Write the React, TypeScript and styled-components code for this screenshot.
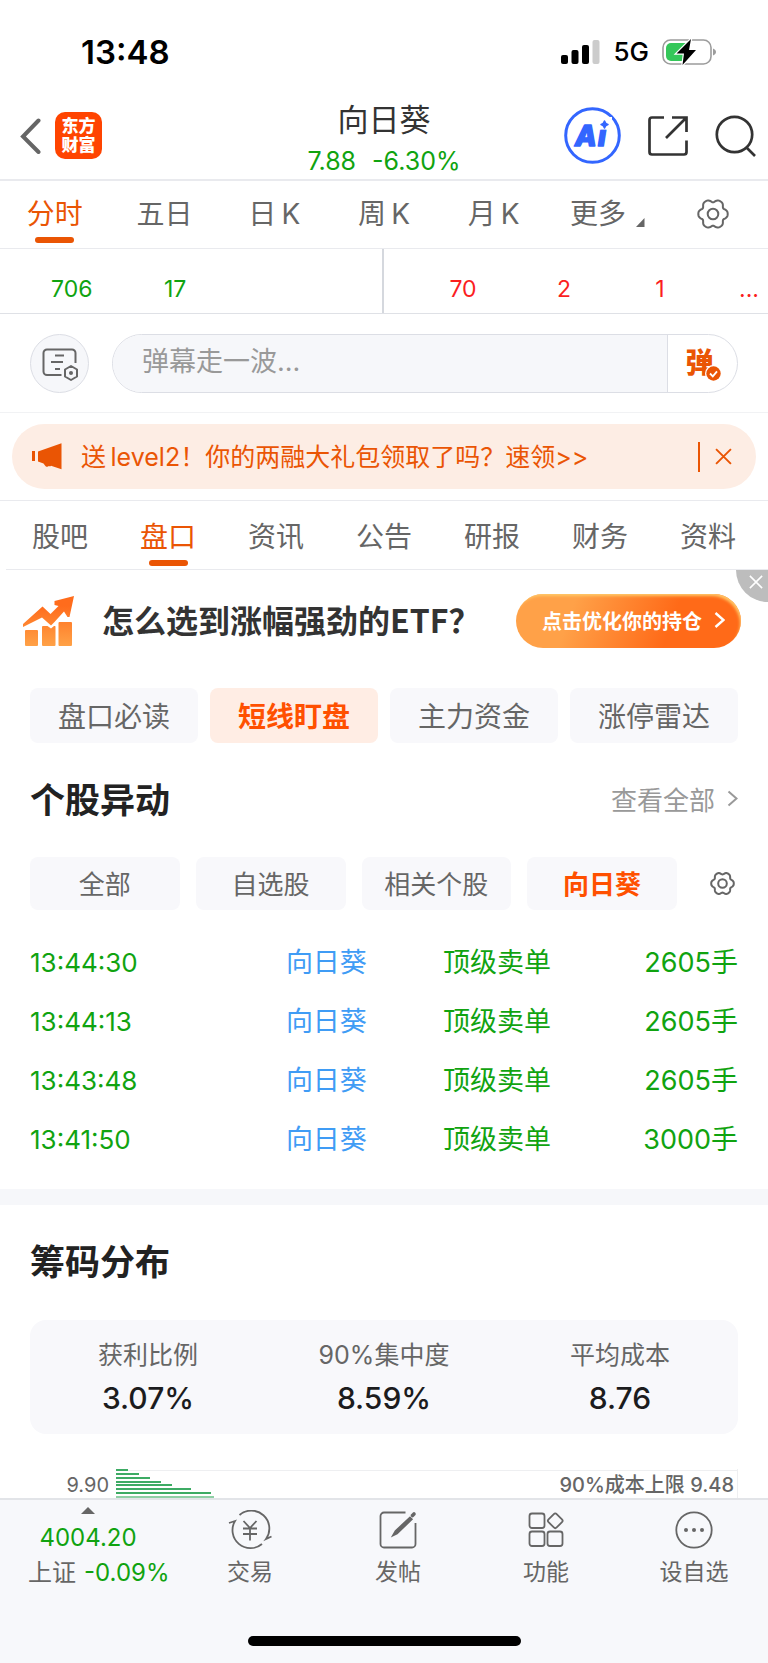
import React from "react";
import styled, { createGlobalStyle } from "styled-components";

const sans = `Inter, "Noto Sans CJK SC", sans-serif`;
const c = {
  orange: "#ea5504",
  vivid: "#ff5000",
  green: "#10a310",
  red: "#fb1f1f",
  blue: "#3f9cf5",
  ink: "#222",
  text: "#666",
  muted: "#999",
  line: "#e9eaee",
  soft: "#f8f8fb",
};

const Global = createGlobalStyle`
  *, *::before, *::after { box-sizing: border-box; }
  body { margin: 0; background: #fff; color: ${c.text}; font-family: ${sans}; }
  button, input { font: inherit; color: inherit; }
  button { border: 0; padding: 0; margin: 0; background: none; cursor: pointer; }
  svg { display: block; flex: none; }
`;

const Page = styled.div`
  min-height: 100vh;
  display: flex;
  flex-direction: column;
`;

/* status bar */
const StatusBar = styled.div`
  height: 95px;
  padding: 8px 51px 0 81px;
  display: flex;
  align-items: center;
  justify-content: space-between;
  color: #000;
`;
const Clock = styled.time`
  font-size: 33px;
  font-weight: 600;
`;
const StatusIcons = styled.div`
  display: flex;
  align-items: center;
  gap: 13px;
  font-size: 26px;
  font-weight: 500;
`;

/* header */
const Header = styled.header`
  height: 86px;
  padding: 0 11px;
  display: grid;
  grid-template-columns: 1fr auto 1fr;
  align-items: center;
  border-bottom: 2px solid ${c.line};
`;
const HeaderSide = styled.div<{ $end?: boolean }>`
  display: flex;
  align-items: center;
  gap: ${(p) => (p.$end ? 27 : 14)}px;
  padding: 0 0 3px ${(p) => (p.$end ? 0 : 9)}px;
  justify-content: ${(p) => (p.$end ? "flex-end" : "flex-start")};
`;
const Logo = styled.a`
  width: 47px;
  height: 47px;
  border-radius: 10px;
  background: #ff4400;
  color: #fff;
  display: flex;
  align-items: center;
  justify-content: center;
  text-align: center;
  text-decoration: none;
  font-size: 17px;
  line-height: 19px;
  font-weight: 900;
`;
const StockTitle = styled.div`
  padding-top: 2px;
  text-align: center;
`;
const StockName = styled.h1`
  margin: 0;
  font-size: 31px;
  line-height: 46px;
  font-weight: 400;
  color: #333;
`;
const StockQuote = styled.div`
  display: flex;
  justify-content: center;
  gap: 16px;
  font-size: 25px;
  line-height: 36px;
  color: ${c.green};
`;

/* tab strips */
const Tabs = styled.nav<{ $inset?: boolean }>`
  height: ${(p) => (p.$inset ? 69 : 68)}px;
  margin-left: ${(p) => (p.$inset ? 6 : 0)}px;
  padding: 0 ${(p) => (p.$inset ? 6 : 0)}px ${(p) => (p.$inset ? 3 : 5)}px 0;
  display: flex;
  align-items: flex-end;
  border-bottom: 1px solid ${c.line};
`;
const Tab = styled.button<{ $active?: boolean }>`
  flex: 1;
  display: flex;
  flex-direction: column;
  align-items: center;
  gap: 3px;
  font-size: 28px;
  line-height: 40px;
  color: ${(p) => (p.$active ? c.orange : c.text)};
  &::after {
    content: "";
    width: 39px;
    height: 6px;
    border-radius: 3px;
    background: ${(p) => (p.$active ? c.orange : "transparent")};
  }
`;
const TabLabel = styled.span<{ $menu?: boolean }>`
  height: 40px;
  display: flex;
  align-items: center;
  gap: 10px;
  padding-left: ${(p) => (p.$menu ? 8 : 0)}px;
`;

/* order volumes */
const Volumes = styled.div`
  height: 65px;
  display: grid;
  grid-template-columns: 1fr 1fr;
  font-size: 23px;
  border-bottom: 1px solid #dfe1e6;
`;
const VolumeSide = styled.div<{ $sell?: boolean }>`
  display: grid;
  grid-template-columns: ${(p) => (p.$sell ? "98fr 104fr 88fr 64fr" : "104fr 104fr 156fr")};
  padding: ${(p) => (p.$sell ? "16px 0 0 30px" : "16px 0 0 20px")};
  align-items: center;
  text-align: center;
  color: ${(p) => (p.$sell ? c.red : c.green)};
  border-right: ${(p) => (p.$sell ? "0" : "2px solid #d5d8de")};
`;
const More = styled.span`
  padding-left: 26px;
`;

/* bullet comment bar */
const CommentBar = styled.form`
  height: 99px;
  margin: 0;
  padding: 0 30px;
  display: flex;
  align-items: center;
  gap: 23px;
  border-bottom: 1px solid #f1f2f4;
`;
const RoundButton = styled.button`
  width: 59px;
  height: 59px;
  flex: none;
  border: 1px solid #dcdee5;
  border-radius: 50%;
  background: #f6f7fa;
  display: flex;
  align-items: center;
  justify-content: center;
  padding: 3px 0 0 2px;
`;
const CommentBox = styled.div`
  flex: 1;
  height: 59px;
  display: flex;
  border: 1px solid #dcdee5;
  border-radius: 30px;
  overflow: hidden;
`;
const CommentInput = styled.input`
  flex: 1;
  min-width: 0;
  border: 0;
  outline: 0;
  padding: 0 29px 4px;
  background: #f6f7fa;
  font-size: 27px;
  &::placeholder { color: #999; opacity: 1; }
`;
const CommentToggle = styled.button`
  width: 70px;
  border-left: 1px solid #dcdee5;
  display: flex;
  align-items: center;
  justify-content: center;
  color: ${c.orange};
  font-size: 28px;
  line-height: 40px;
  font-weight: 900;
  position: relative;
  padding-right: 6px;
  svg { position: absolute; right: 15px; bottom: 10px; }
`;

/* promo notice */
const NoticeWrap = styled.div`
  padding: 11px 12px;
  border-bottom: 1px solid ${c.line};
`;
const Notice = styled.div`
  height: 65px;
  padding: 0 24px 0 20px;
  display: flex;
  align-items: center;
  border-radius: 33px;
  background: #fdede4;
  color: ${c.orange};
`;
const NoticeLink = styled.a`
  flex: 1;
  margin-left: 19px;
  padding-bottom: 3px;
  color: inherit;
  text-decoration: none;
  font-size: 25px;
  white-space: nowrap;
`;
const NoticeClose = styled.button`
  height: 30px;
  padding-left: 15px;
  border-left: 2px solid ${c.orange};
`;

/* ETF ad */
const Ad = styled.section`
  position: relative;
  height: 102px;
  padding: 0 27px 0 23px;
  display: flex;
  align-items: center;
`;
const AdText = styled.strong`
  flex: 1;
  margin-left: 27px;
  padding-bottom: 4px;
  font-size: 32px;
  font-weight: 600;
  color: #333;
  white-space: nowrap;
  font-family: "Noto Sans CJK SC", sans-serif;
`;
const AdButton = styled.button`
  width: 225px;
  height: 54px;
  padding: 0 0 2px 10px;
  border-radius: 27px;
  display: flex;
  align-items: center;
  justify-content: center;
  gap: 12px;
  background: linear-gradient(110deg, #ffa148 25%, #ff6a18 68%);
  box-shadow: inset -2px 3px 3px -1px #ffc868;
  color: #fff;
  font-size: 20px;
  font-weight: 700;
`;
const AdClose = styled.button`
  position: absolute;
  top: 0;
  right: 0;
  width: 32px;
  height: 32px;
  border-bottom-left-radius: 32px;
  background: #bdbdbd;
  display: flex;
  justify-content: flex-end;
  padding: 0 5px 8px 0;
  align-items: center;
`;

/* chips and sections */
const Section = styled.section`
  padding: 0 30px;
`;
const ChipRow = styled.div`
  margin-top: 16px;
  display: grid;
  grid-template-columns: repeat(4, 1fr);
  gap: 12px;
`;
const FilterRow = styled.div`
  margin-top: 29px;
  display: grid;
  grid-template-columns: repeat(4, 1fr) 45px;
  gap: 16px;
  align-items: center;
`;
const Chip = styled.button<{ $active?: boolean; $tinted?: boolean; $small?: boolean }>`
  height: ${(p) => (p.$small ? 53 : 55)}px;
  padding-bottom: ${(p) => (p.$small ? 3 : 1)}px;
  border-radius: 8px;
  font-size: ${(p) => (p.$small ? 26 : 28)}px;
  font-weight: ${(p) => (p.$active ? 700 : 400)};
  color: ${(p) => (p.$active ? c.vivid : c.text)};
  background: ${(p) => (p.$tinted ? "#ffede4" : c.soft)};
`;
const FilterSettings = styled.button`
  display: flex;
  justify-content: flex-end;
  padding-right: 3px;
`;
const SectionHead = styled.div`
  margin-top: 29px;
  display: flex;
  align-items: center;
  justify-content: space-between;
`;
const Heading = styled.h2`
  margin: 0;
  font-size: 35px;
  line-height: 56px;
  font-weight: 600;
  color: ${c.ink};
`;
const SeeAll = styled.a`
  display: flex;
  align-items: center;
  gap: 12px;
  padding-bottom: 3px;
  font-size: 26px;
  color: ${c.muted};
  text-decoration: none;
`;

const MoveTable = styled.table`
  width: 100%;
  margin: 23px 0 20px;
  border-collapse: collapse;
  table-layout: fixed;
  font-size: 27px;
  color: ${c.green};
`;
const MoveTime = styled.td`
  width: 36%;
  height: 59px;
  padding: 0;
  font-size: 26px;
`;
const MoveName = styled.td`
  padding: 0 0 4px 1px;
  color: ${c.blue};
`;
const MoveKind = styled.td`
  width: 150px;
  padding: 0 0 4px;
  white-space: nowrap;
`;
const MoveSize = styled.td`
  width: 145px;
  padding: 0 0 4px;
  text-align: right;
  white-space: nowrap;
`;
const Divider = styled.hr`
  width: 100%;
  height: 16px;
  margin: 0;
  border: 0;
  background: #f6f7fa;
`;
const StatCard = styled.dl`
  margin: 30px 0 0;
  height: 114px;
  padding-bottom: 2px;
  border-radius: 16px;
  background: ${c.soft};
  display: grid;
  grid-template-columns: repeat(3, 1fr);
  align-items: center;
  text-align: center;
`;
const StatLabel = styled.dt`
  font-size: 25px;
  line-height: 44px;
`;
const StatValue = styled.dd`
  margin: 0;
  font-size: 30px;
  line-height: 42px;
  font-weight: 500;
  color: #1c1c1e;
`;

/* chip distribution chart */
const Chart = styled.div`
  height: 29px;
  margin-top: 35px;
  overflow: hidden;
  display: flex;
  font-size: 20px;
  line-height: 32px;
`;
const AxisLabel = styled.span`
  width: 86px;
  padding-right: 7px;
  text-align: right;
`;
const Plot = styled.div`
  flex: 1;
  display: flex;
  justify-content: space-between;
  border-right: 1px solid #eeeff1;
  background: linear-gradient(#eeeff1, #eeeff1) 0 1px / 100% 1px no-repeat;
`;
const UpperCost = styled.span`
  padding-right: 3px;
  font-weight: 500;
`;

/* bottom bar */
const BottomBar = styled.footer`
  flex: 1;
  border-top: 2px solid #e2e4e8;
  background: #f7f8fb;
  display: flex;
  flex-direction: column;
  justify-content: space-between;
  align-items: center;
  padding-bottom: 17px;
`;
const BottomNav = styled.nav`
  width: 100%;
  display: grid;
  grid-template-columns: 176fr 148fr 148fr 148fr 148fr;
`;
const IndexButton = styled.button`
  padding-top: 7px;
  display: flex;
  flex-direction: column;
  align-items: center;
  font-size: 24px;
  line-height: 35px;
  white-space: nowrap;
`;
const IndexValue = styled.span`
  margin-top: 6px;
  color: ${c.green};
`;
const IndexChange = styled.span`
  display: flex;
  gap: 8px;
  align-self: flex-start;
  margin-left: 28px;
  em { font-style: normal; color: ${c.green}; }
`;
const NavButton = styled.button`
  padding-top: 10px;
  display: flex;
  flex-direction: column;
  align-items: center;
  gap: 4px;
  font-size: 23px;
  line-height: 36px;
`;
const HomeIndicator = styled.div`
  width: 273px;
  height: 10px;
  border-radius: 5px;
  background: #000;
`;

/* icons */
function gearPath(radius: number, wave: number, center: number) {
  const pts: string[] = [];
  for (let i = 0; i < 120; i++) {
    const a = (i / 120) * Math.PI * 2;
    const r = radius + wave * (Math.cos(6 * a) - 0.2 * Math.cos(12 * a));
    pts.push(`${(center + r * Math.cos(a)).toFixed(2)} ${(center + r * Math.sin(a)).toFixed(2)}`);
  }
  return `M${pts.join("L")}Z`;
}
const Gear = ({ size, hole, wave }: { size: number; hole: number; wave: number }) => (
  <svg width={size} height={size} fill="none" stroke={c.text} strokeWidth="2">
    <path d={gearPath(size / 2 - 1 - wave, wave, size / 2)} />
    <circle cx={size / 2} cy={size / 2} r={hole} />
  </svg>
);
const Signal = () => (
  <svg width="39" height="25">
    <rect x="0" y="16" width="7" height="9" rx="2" />
    <rect x="10.5" y="11" width="7" height="14" rx="2" />
    <rect x="21" y="6" width="7" height="19" rx="2" />
    <rect x="31.5" y="1" width="7" height="24" rx="2" fill="#ccc" />
  </svg>
);
const Battery = () => (
  <svg width="55" height="28" viewBox="0 0 55 28">
    <rect x="1" y="2" width="48" height="24" rx="7.5" fill="#fff" stroke="#9c9c9c" strokeWidth="1.6" />
    <path d="M9 5H24V23H9a5 5 0 0 1-5-5v-8a5 5 0 0 1 5-5z" fill="#34c759" />
    <path d="M51 10.5c4 1.500 4 5.500 0 7z" fill="#9c9c9c" />
    <path d="M29 1 14.500 15.500h7.500L20.500 27 34 12h-7z" fill="#000" stroke="#fff" strokeWidth="2.400" paintOrder="stroke" />
  </svg>
);
const Back = () => (
  <svg width="21" height="36" fill="none" stroke={c.text} strokeWidth="4" strokeLinecap="round">
    <path d="M18.500 2.500 3 18.500l15.500 15.500" />
  </svg>
);
const AiMark = () => (
  <svg width="57" height="57">
    <circle cx="28.500" cy="28.500" r="26.800" fill="none" stroke="#3366ff" strokeWidth="3" />
    <g fill="#3366ff" stroke="#3366ff" strokeWidth="1.600" strokeLinejoin="round" fontFamily="Inter, sans-serif" fontSize="28" fontWeight="800" fontStyle="italic">
      <text y="38.500"><tspan x="11">A</tspan><tspan x="34">i</tspan></text>
    </g>
    <path d="M35 10h13v12.500H34z" fill="#fff" />
    <path d="M40.500 14q.8 3 3.500 3.500-2.700.8-3.500 3.500-.8-2.700-3.500-3.500 2.700-.5 3.500-3.500z" fill="#3366ff" stroke="#3366ff" strokeWidth="1.500" strokeLinejoin="round" />
  </svg>
);
const Share = () => (
  <svg width="40" height="40" fill="none" stroke="#333" strokeWidth="2.700">
    <path d="M16 1.500H4A2.500 2.500 0 0 0 1.500 4v32A2.500 2.500 0 0 0 4 38.500h32a2.500 2.500 0 0 0 2.500-2.500V24.500M24 1.500h14.500V16M38 2 18 22" />
  </svg>
);
const Search = () => (
  <svg width="42" height="42" fill="none" stroke="#333" strokeWidth="2.700">
    <circle cx="19.500" cy="19.500" r="17.700" />
    <path d="m31.500 32.500 8.500 8.500" />
  </svg>
);
const CommentSettings = () => (
  <svg width="38" height="34" fill="none" stroke={c.text} strokeWidth="2">
    <path d="M33.500 15V5A3.500 3.500 0 0 0 30 1.500H5A3.500 3.500 0 0 0 1.500 5v18.500A3.500 3.500 0 0 0 5 27h14.500" />
    <path d="M13 7.500h9M9 14h12M13 21h5" />
    <path d="m29 18 6 3.500v7L29 32l-6-3.500v-7z" strokeLinejoin="round" />
    <circle cx="29" cy="25" r="2" fill={c.text} stroke="none" />
  </svg>
);
const CheckBadge = () => (
  <svg width="17" height="17">
    <circle cx="8.500" cy="8.500" r="8.500" fill="#fff" />
    <circle cx="8.500" cy="8.500" r="7.200" fill={c.orange} />
    <path d="m5 8.500 2.800 2.800L12 6.300" fill="none" stroke="#fff" strokeWidth="1.800" />
  </svg>
);
const Megaphone = () => (
  <svg width="30" height="27" fill={c.orange}>
    <path d="M0 8h3v10H0zM6 8.500 29.500.3V26.300L19 22.800c-.8 1-1.600.2-2.200.2-.8 1-3 1-3.800-.6l-1.500-2L6 18.500z" />
  </svg>
);
const Cross = ({ size, color, width }: { size: number; color: string; width: number }) => (
  <svg width={size} height={size} viewBox="0 0 16 16" fill="none" stroke={color} strokeWidth={width}>
    <path d="m1 1 14 14M15 1 1 15" />
  </svg>
);
const Growth = () => (
  <svg width="52" height="51">
    <defs>
      <linearGradient id="growth" x1="0" y1="0" x2="0" y2="51" gradientUnits="userSpaceOnUse">
        <stop offset=".2" stopColor="#ff6c1c" />
        <stop offset="1" stopColor="#ffa348" />
      </linearGradient>
    </defs>
    <path
      fill="url(#growth)"
      d="M0 28 19.500 10.500l8 7.500 8-8-4-1V5L51 0 46.500 21h-2L41 15.500 31.500 26 28 29.500 19 21.500 0 31zM2 35q0-1 1-1h11q1 0 1 1v14q0 1-1 1H3q-1 0-1-1zM19 31q0-1 1-1h4.500l3.500 2.500 3-2.500h1q.500 0 .5 1v18q0 1-1 1H20q-1 0-1-1zM35.500 27q0-1 1-1h11.500q1 0 1 1v22q0 1-1 1H36.500q-1 0-1-1z"
    />
  </svg>
);
const Chevron = ({ height, width = 2 }: { height: number; width?: number }) => (
  <svg width="11" height={height} viewBox="0 0 11 16" fill="none" stroke="currentColor" strokeWidth={width}>
    <path d="m1.500 1 8 7-8 7" />
  </svg>
);
const bars = [12, 23, 34, 45, 56, 75, 95, 98];
const Bars = () => (
  <svg width="98" height="29">
    {bars.map((w, i) => (
      <rect key={w} x="0" y={i * 4 - (i > 3 ? 1 : 0)} width={w} height="2" fill={i === 7 ? "#8fcfa5" : "#3dab64"} />
    ))}
  </svg>
);
const Trade = () => (
  <svg width="44" height="40" fill="none" stroke={c.text} strokeWidth="1.800">
    <path d="M11.500 5A18 18 0 0 1 38 29l5.500-2.500M34 34A18 18 0 0 1 7 11L1 13" />
    <path d="m15.500 11 6.500 7 6.500-7M15 18.500h14M15 24h14M22 18v12.500" />
  </svg>
);
const Post = () => (
  <svg width="38" height="40" fill="none" stroke={c.text} strokeWidth="1.800">
    <path d="M26.500 2.500H5A3.500 3.500 0 0 0 1.500 6v28A3.500 3.500 0 0 0 5 37.500h28a3.500 3.500 0 0 0 3.500-3.500V13" />
    <path d="m14 25.500 2.500-4.500L31 7.500l1.800 1.800L18 23.500z" fill={c.text} />
    <path d="m33.500 5.500 1.500-1.500" strokeWidth="3.600" strokeLinecap="round" />
  </svg>
);
const Features = () => (
  <svg width="36" height="40" fill="none" stroke={c.text} strokeWidth="1.800">
    <rect x="1.500" y="3.500" width="15" height="14.500" rx="2.500" />
    <rect x="1.500" y="21.500" width="15" height="14.500" rx="2.500" />
    <rect x="19.500" y="21.500" width="15" height="14.500" rx="2.500" />
    <rect x="21.500" y="5" width="11.500" height="11.500" rx="2" transform="rotate(45 27.250 10.750)" />
  </svg>
);
const Dots = () => (
  <svg width="40" height="40" fill={c.text}>
    <circle cx="20" cy="20" r="17.700" fill="none" stroke={c.text} strokeWidth="1.800" />
    <circle cx="12" cy="20" r="2" />
    <circle cx="20" cy="20" r="2" />
    <circle cx="28" cy="20" r="2" />
  </svg>
);

const periods = ["分时", "五日", "日\u2009K", "周\u2009K", "月\u2009K"];
const channels = ["股吧", "盘口", "资讯", "公告", "研报", "财务", "资料"];
const topics = ["盘口必读", "短线盯盘", "主力资金", "涨停雷达"];
const filters = ["全部", "自选股", "相关个股", "向日葵"];
const moves = [
  ["13:44:30", "2605手"],
  ["13:44:13", "2605手"],
  ["13:43:48", "2605手"],
  ["13:41:50", "3000手"],
];
const stats = [
  ["获利比例", "3.07%"],
  ["90%集中度", "8.59%"],
  ["平均成本", "8.76"],
];
const actions = [
  { label: "交易", icon: <Trade /> },
  { label: "发帖", icon: <Post /> },
  { label: "功能", icon: <Features /> },
  { label: "设自选", icon: <Dots /> },
];

export default function App() {
  return (
    <Page>
      <Global />
      <StatusBar>
        <Clock>13:48</Clock>
        <StatusIcons>
          <Signal />
          <span>5G</span>
          <Battery />
        </StatusIcons>
      </StatusBar>

      <Header>
        <HeaderSide>
          <button aria-label="返回"><Back /></button>
          <Logo href="#">东方<br />财富</Logo>
        </HeaderSide>
        <StockTitle>
          <StockName>向日葵</StockName>
          <StockQuote><span>7.88</span><span>-6.30%</span></StockQuote>
        </StockTitle>
        <HeaderSide $end>
          <button aria-label="智能助手"><AiMark /></button>
          <button aria-label="分享"><Share /></button>
          <button aria-label="搜索"><Search /></button>
        </HeaderSide>
      </Header>

      <Tabs>
        {periods.map((p, i) => <Tab key={p} $active={i === 0}>{p}</Tab>)}
        <Tab>
          <TabLabel $menu>
            更多
            <svg width="9" height="26" fill={c.text}><path d="M8.500 17v9H0z" /></svg>
          </TabLabel>
        </Tab>
        <Tab aria-label="图表设置"><TabLabel><Gear size={32} hole={5.3} wave={1.5} /></TabLabel></Tab>
      </Tabs>

      <Volumes>
        <VolumeSide><span>706</span><span>17</span></VolumeSide>
        <VolumeSide $sell><span>70</span><span>2</span><span>1</span><More>...</More></VolumeSide>
      </Volumes>

      <CommentBar>
        <RoundButton type="button" aria-label="弹幕设置"><CommentSettings /></RoundButton>
        <CommentBox>
          <CommentInput aria-label="弹幕" placeholder="弹幕走一波..." />
          <CommentToggle type="button">弹<CheckBadge /></CommentToggle>
        </CommentBox>
      </CommentBar>

      <NoticeWrap>
        <Notice>
          <Megaphone />
          <NoticeLink href="#">送{"\u2009"}level2！你的两融大礼包领取了吗？速领&gt;&gt;</NoticeLink>
          <NoticeClose aria-label="关闭提示"><Cross size={17} color={c.orange} width={1.8} /></NoticeClose>
        </Notice>
      </NoticeWrap>

      <Tabs $inset>
        {channels.map((t, i) => <Tab key={t} $active={i === 1}>{t}</Tab>)}
      </Tabs>

      <Ad>
        <Growth />
        <AdText>怎么选到涨幅强劲的ETF？</AdText>
        <AdButton>点击优化你的持仓<Chevron height={16} width={2.4} /></AdButton>
        <AdClose aria-label="关闭广告"><Cross size={14} color="#fff" width={1.8} /></AdClose>
      </Ad>

      <Section>
        <ChipRow>
          {topics.map((t, i) => <Chip key={t} $active={i === 1} $tinted={i === 1}>{t}</Chip>)}
        </ChipRow>
        <SectionHead>
          <Heading>个股异动</Heading>
          <SeeAll href="#">查看全部<Chevron height={17} /></SeeAll>
        </SectionHead>
        <FilterRow>
          {filters.map((f, i) => <Chip key={f} $small $active={i === 3}>{f}</Chip>)}
          <FilterSettings aria-label="筛选设置"><Gear size={25} hole={4.3} wave={1.1} /></FilterSettings>
        </FilterRow>
        <MoveTable>
          <tbody>
            {moves.map(([time, size]) => (
              <tr key={time}>
                <MoveTime>{time}</MoveTime>
                <MoveName>向日葵</MoveName>
                <MoveKind>顶级卖单</MoveKind>
                <MoveSize>{size}</MoveSize>
              </tr>
            ))}
          </tbody>
        </MoveTable>
      </Section>

      <Divider />

      <Section>
        <SectionHead><Heading>筹码分布</Heading></SectionHead>
        <StatCard>
          {stats.map(([label, value]) => (
            <div key={label}>
              <StatLabel>{label}</StatLabel>
              <StatValue>{value}</StatValue>
            </div>
          ))}
        </StatCard>
        <Chart>
          <AxisLabel>9.90</AxisLabel>
          <Plot>
            <Bars />
            <UpperCost>90%成本上限 9.48</UpperCost>
          </Plot>
        </Chart>
      </Section>

      <BottomBar>
        <BottomNav>
          <IndexButton>
            <svg width="14" height="7" fill={c.text}><path d="M7 0l7 7H0z" /></svg>
            <IndexValue>4004.20</IndexValue>
            <IndexChange>上证<em>-0.09%</em></IndexChange>
          </IndexButton>
          {actions.map((a) => (
            <NavButton key={a.label}>{a.icon}{a.label}</NavButton>
          ))}
        </BottomNav>
        <HomeIndicator />
      </BottomBar>
    </Page>
  );
}
